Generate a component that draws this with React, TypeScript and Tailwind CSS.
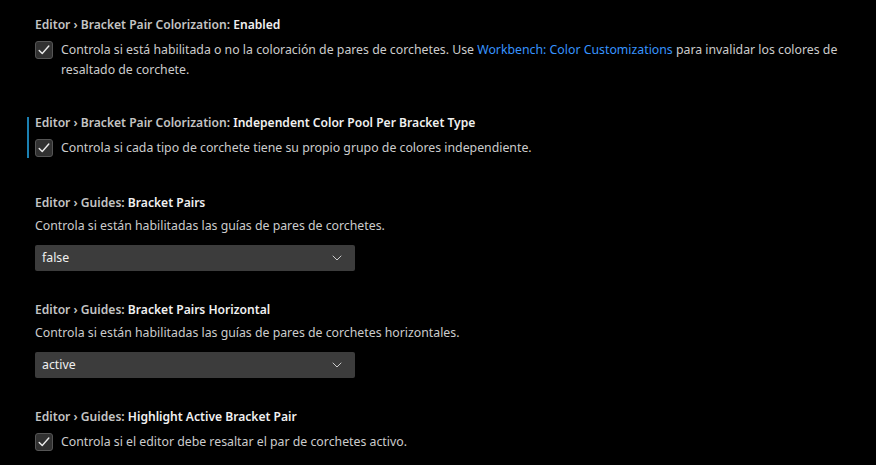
import { ChevronDown } from "lucide-react";

type Setting = {
  category: string;
  name: string;
  kind: "checkbox" | "select";
  desc: React.ReactNode;
  value?: string;
  modified?: boolean;
};

const settings: Setting[] = [
  {
    category: "Editor › Bracket Pair Colorization: ",
    name: "Enabled",
    kind: "checkbox",
    desc: (
      <>
        Controla si está habilitada o no la coloración de pares de corchetes. Use{" "}
        <span className="text-[#3794ff]">Workbench: Color Customizations</span> para invalidar los
        colores de resaltado de corchete.
      </>
    ),
  },
  {
    category: "Editor › Bracket Pair Colorization: ",
    name: "Independent Color Pool Per Bracket Type",
    kind: "checkbox",
    modified: true,
    desc: "Controla si cada tipo de corchete tiene su propio grupo de colores independiente.",
  },
  {
    category: "Editor › Guides: ",
    name: "Bracket Pairs",
    kind: "select",
    value: "false",
    desc: "Controla si están habilitadas las guías de pares de corchetes.",
  },
  {
    category: "Editor › Guides: ",
    name: "Bracket Pairs Horizontal",
    kind: "select",
    value: "active",
    desc: "Controla si están habilitadas las guías de pares de corchetes horizontales.",
  },
  {
    category: "Editor › Guides: ",
    name: "Highlight Active Bracket Pair",
    kind: "checkbox",
    desc: "Controla si el editor debe resaltar el par de corchetes activo.",
  },
];

function Checkbox() {
  return (
    <div className="mt-[1px] flex h-[18px] w-[18px] shrink-0 items-center justify-center rounded-[3px] border border-[#555555] bg-[#313131]">
      <svg width="14" height="14" viewBox="0 0 16 16" fill="none">
        <path d="M2.5 8.5l3.5 3.5 7.5-8.5" stroke="#ececec" strokeWidth="1.6" strokeLinecap="round" strokeLinejoin="round" />
      </svg>
    </div>
  );
}

function SettingItem({ s, first }: { s: Setting; first: boolean }) {
  const pad = s.kind === "select" ? "pb-4" : first ? "pb-5" : "pb-[22px]";
  return (
    <div className={`relative pl-[35px] pr-6 pt-3 ${pad}`}>
      {s.modified && <div className="absolute left-[27px] top-[17px] bottom-[22px] w-[2px] bg-[#1b80b2]" />}
      <div className="text-[12.1px] leading-[22px] font-semibold">
        <span className="text-[#c4c4c4]">{s.category}</span>
        <span className="text-[#f0f0f0]">{s.name}</span>
      </div>
      {s.kind === "checkbox" ? (
        <div className="mt-1 flex gap-2 text-[12.3px] leading-[20px] text-[#cccccc]">
          <Checkbox />
          <div>{s.desc}</div>
        </div>
      ) : (
        <>
          <div className="mt-0.5 text-[12.3px] leading-[20px] text-[#cccccc]">{s.desc}</div>
          <div className="mt-[9px] flex h-[26px] w-[320px] items-center justify-between rounded-[2px] bg-[#3c3c3c] pl-[7px] pr-[10px] text-[12.3px] text-[#f0f0f0]">
            <span>{s.value}</span>
            <ChevronDown size={16} strokeWidth={1.5} className="text-[#cccccc]" />
          </div>
        </>
      )}
    </div>
  );
}

export default function App() {
  return (
    <div className="h-[465px] w-[876px] overflow-hidden bg-black pt-[2px] font-['Noto_Sans',sans-serif]">
      {settings.map((s, i) => (
        <SettingItem key={i} s={s} first={i === 0} />
      ))}
    </div>
  );
}
